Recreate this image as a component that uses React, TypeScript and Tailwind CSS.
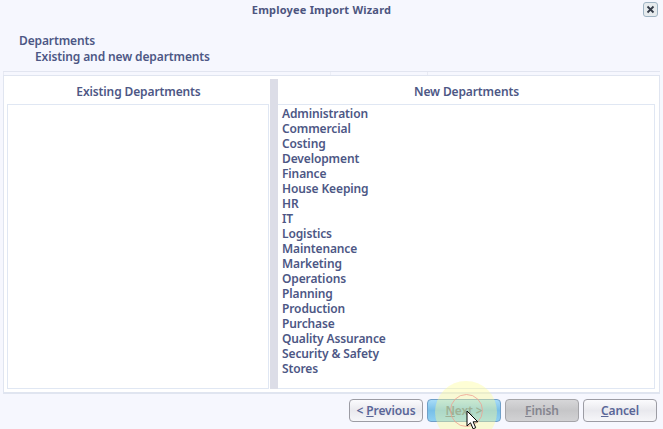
const departments = [
  'Administration',
  'Commercial',
  'Costing',
  'Development',
  'Finance',
  'House Keeping',
  'HR',
  'IT',
  'Logistics',
  'Maintenance',
  'Marketing',
  'Operations',
  'Planning',
  'Production',
  'Purchase',
  'Quality Assurance',
  'Security & Safety',
  'Stores',
]

const buttonBase =
  'w-[74px] h-[23px] rounded-[4px] border text-[12px] font-semibold flex items-center justify-center'

export default function App() {
  return (
    <div className="relative w-[663px] h-[429px] overflow-hidden bg-[#f6f7fe] text-[#4d5785] font-['Noto_Sans','Open_Sans',sans-serif] text-[12px] font-semibold tracking-[-0.12px]">
      {/* title bar */}
      <div className="relative h-[19px] pr-[20px] pt-[1px] flex items-center justify-center text-[#4d5580] font-bold text-[11px] tracking-[0.2px]">
        <span>Employee Import Wizard</span>
        <button className="absolute right-[5px] top-[2px] w-[15px] h-[15px] rounded-[3px] border border-[#9fb4c4] bg-[#e6ebee] flex items-center justify-center">
          <svg width="9" height="9" viewBox="0 0 9 9">
            <path d="M1.5 1.5l6 6M7.5 1.5l-6 6" stroke="#333a48" strokeWidth="1.8" fill="none" />
          </svg>
        </button>
      </div>

      {/* wizard heading */}
      <div className="h-[52px] pt-[14px] pl-[19px] leading-[16px]">
        <div>Departments</div>
        <div className="pl-[16px]">Existing and new departments</div>
      </div>

      <div className="mx-[3px] h-[1px] bg-[#e2e5f0]" />

      {/* faint column ticks under the heading rule */}
      <div className="mx-[3px] h-[3px] flex">
        <div className="w-[327px] border-l border-[#e8eaf3]" />
        <div className="w-[97px] border-l border-[#eceef6]" />
        <div className="flex-1 border-l border-[#e8eaf3]" />
      </div>

      {/* main panel */}
      <div className="mx-[3px] h-[319px] border border-[#e0e5f0] border-b-[2px] bg-white p-[3px] pr-[4px] flex">
        <div className="w-[263px] flex flex-col">
          <div className="h-[25px] flex items-center justify-center text-[12px]">Existing Departments</div>
          <div className="flex-1 border border-[#e0e7f3] bg-white mr-[1px]" />
        </div>
        <div className="w-[8px] bg-[#dcdde7]" />
        <div className="flex-1 flex flex-col">
          <div className="h-[25px] flex items-center justify-center text-[12px]">New Departments</div>
          <div className="flex-1 border border-[#e0e7f3] border-l-0 bg-white pl-[4px] pt-[1px]">
            {departments.map((d) => (
              <div key={d} className="h-[15px] leading-[15px] whitespace-nowrap">
                {d}
              </div>
            ))}
          </div>
        </div>
      </div>

      {/* footer buttons */}
      <div className="mt-[5px] pr-[6px] flex justify-end gap-[4px]">
        <button className={`${buttonBase} border-[#9c9ca4] bg-gradient-to-b from-[#fbfbfd] via-[#e9e9ee] to-[#f6f6f9] text-[#5a6698]`}>
          <span>
            &lt; <span className="underline">P</span>revious
          </span>
        </button>
        <button className={`${buttonBase} border-[#6f9fc8] bg-gradient-to-b from-[#a8dcf8] via-[#78bfe8] to-[#8ed0f2] text-[#5f7f94]`}>
          <span>
            <span className="underline">N</span>ext &gt;
          </span>
        </button>
        <button className={`${buttonBase} border-[#a4a4a8] bg-gradient-to-b from-[#d6d6d8] via-[#c6c6c8] to-[#d2d2d4] text-[#85858f]`}>
          <span>
            <span className="underline">F</span>inish
          </span>
        </button>
        <button className={`${buttonBase} border-[#9c9ca4] bg-gradient-to-b from-[#fbfbfd] via-[#e9e9ee] to-[#f6f6f9] text-[#5a6698]`}>
          <span>
            <span className="underline">C</span>ancel
          </span>
        </button>
      </div>

      {/* click highlight around the pointer */}
      <div className="absolute left-[435px] top-[381px] w-[62px] h-[62px] rounded-full bg-[#fdfd96]/40 pointer-events-none" />
      <div className="absolute left-[450px] top-[394px] w-[33px] h-[33px] rounded-full border border-[#f0a090]/80 pointer-events-none" />
      <svg className="absolute left-[466px] top-[410px] pointer-events-none" width="13" height="20" viewBox="0 0 13 20">
        <path d="M1 1v15l3.5-3.2 2.6 6 2.6-1.1-2.6-5.9h4.7z" fill="#fff" stroke="#000" strokeWidth="1" strokeLinejoin="miter" />
      </svg>
    </div>
  )
}
